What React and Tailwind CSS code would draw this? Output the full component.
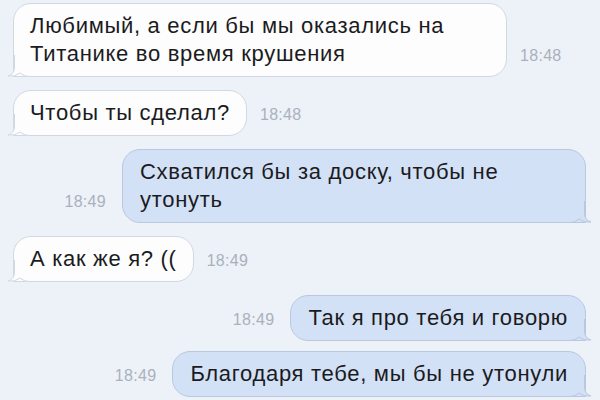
const Tail = ({ out }) => (
    <svg
        className={out ? "absolute -right-[7px] -bottom-px w-[22px] h-[22px] -scale-x-100" : "absolute -left-[7px] -bottom-px w-[22px] h-[22px]"}
        viewBox="0 0 22 22"
    >
        <path d="M7.5 0 L7.5 12 Q7.5 19 1 21 Q8 22 13 18 Q17 21.5 22 21.5 L22 0 Z" fill={out ? "#d3e1f6" : "#fdfdfe"} />
        <path d="M7.5 0 L7.5 12 Q7.5 19 1 21 Q8 22 13 18 Q17 21.5 22 21.5" fill="none" stroke={out ? "#b9c8de" : "#d2d8e2"} strokeWidth="1" />
    </svg>
)

const In = ({ lines, time, w }) => (
    <div className="flex items-end pl-[13px]">
        <div className={"relative bg-[#fdfdfe] border border-[#d2d8e2] rounded-[18px] rounded-bl-none pl-[16px] pr-[16px] py-[8px] " + (w || "")}>
            <Tail />
            <div className="relative">
                {lines.map((l, i) => <div key={i}>{l}</div>)}
            </div>
        </div>
        <span className="ml-[13px] mb-[13px] text-[16px] leading-none text-[#a9b1bc] tracking-[0.3px]">{time}</span>
    </div>
)

const Out = ({ lines, time, w, className }) => (
    <div className={"flex items-end justify-end pr-[14px] " + (className || "")}>
        <span className="mr-[16px] mb-[13px] text-[16px] leading-none text-[#a9b1bc] tracking-[0.3px]">{time}</span>
        <div className={"relative bg-[#d3e1f6] border border-[#b9c8de] rounded-[18px] rounded-br-none pl-[17px] pr-[17px] py-[8px] " + (w || "")}>
            <Tail out />
            <div className="relative">
                {lines.map((l, i) => <div key={i}>{l}</div>)}
            </div>
        </div>
    </div>
)

const App = () => {
    return (
        <div className="w-[600px] h-[400px] overflow-hidden bg-[#edf1f8] font-['Liberation_Sans',Arial,sans-serif] text-[22px] leading-[28px] tracking-[0.7px] text-[#1b1b1d] flex flex-col gap-[13px] pt-[3px]">
            <In lines={["Любимый, а если бы мы оказались на", "Титанике во время крушения"]} time="18:48" w="w-[494px]" />
            <In lines={["Чтобы ты сделал?"]} time="18:48" />
            <Out lines={["Схватился бы за доску, чтобы не", "утонуть"]} time="18:49" w="w-[464px]" />
            <In lines={["А как же я? (("]} time="18:49" />
            <Out lines={["Так я про тебя и говорю"]} time="18:49" />
            <Out lines={["Благодаря тебе, мы бы не утонули"]} time="18:49" className="-mt-[3px]" />
        </div>
    )
}

export default App;
